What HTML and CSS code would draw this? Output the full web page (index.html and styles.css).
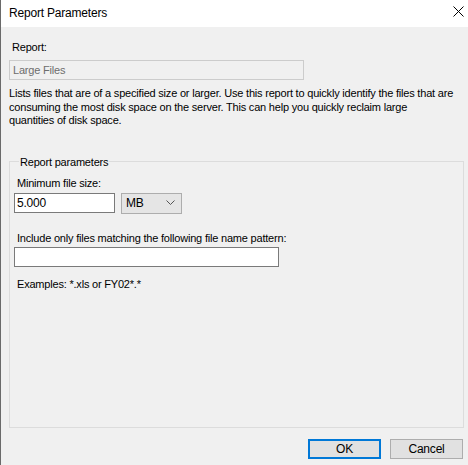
FILE: index.html
```html
<!DOCTYPE html>
<html>
<head>
<meta charset="utf-8">
<link rel="stylesheet" href="styles.css">
</head>
<body>
<div class="window">
  <div class="titlebar">
    <span class="title">Report Parameters</span>
    <svg class="close" width="11" height="11" viewBox="0 0 11 11"><path d="M0.5 0.5 L10.5 10.5 M10.5 0.5 L0.5 10.5" stroke="#000" stroke-width="1" fill="none"/></svg>
  </div>
  <div class="content">
    <div class="label report-label">Report:</div>
    <div class="readonly">Large Files</div>
    <p class="desc">Lists files that are of a specified size or larger. Use this report to quickly identify the files that are consuming the most disk space on the server. This can help you quickly reclaim large<br>quantities of disk space.</p>
    <fieldset class="group">
      <legend>Report parameters</legend>
      <div class="label min-label">Minimum file size:</div>
      <div class="row">
        <div class="textbox size">5.000</div>
        <div class="combo"><span>MB</span>
          <svg width="9" height="6" viewBox="0 0 9 6"><path d="M0.5 0.5 L4.5 4.5 L8.5 0.5" stroke="#555" stroke-width="1" fill="none"/></svg>
        </div>
      </div>
      <div class="label pat-label">Include only files matching the following file name pattern:</div>
      <div class="textbox pattern"></div>
      <div class="label ex-label">Examples: *.xls or FY02*.*</div>
    </fieldset>
    <div class="buttons">
      <div class="btn ok">OK</div>
      <div class="btn cancel">Cancel</div>
    </div>
  </div>
</div>
</body>
</html>
```
FILE: styles.css
```css
html, body {
  margin: 0;
  padding: 0;
}
body {
  width: 468px;
  height: 465px;
  overflow: hidden;
  font-family: "Liberation Sans", Arial, sans-serif;
  font-size: 11px;
  letter-spacing: -0.2px;
  color: #000;
}
.window {
  box-sizing: border-box;
  width: 468px;
  height: 465px;
  background: #f0f0f0;
  border-left: 1px solid #6a6a6a;
  display: flex;
  flex-direction: column;
}
.titlebar {
  height: 27px;
  background: #fff;
  display: flex;
  align-items: center;
  justify-content: space-between;
  padding: 0 4px 0 8px;
  flex-shrink: 0;
}
.title {
  font-size: 12px;
  letter-spacing: -0.2px;
  margin-top: -2px;
}
.close {
  display: block;
  margin-top: -4px;
}
.content {
  padding: 0 4px 0 8px;
  display: flex;
  flex-direction: column;
}
.label {
  line-height: 14px;
  height: 14px;
}
.report-label {
  margin-top: 13px;
  padding-left: 3px;
}
.readonly {
  box-sizing: border-box;
  margin-top: 6px;
  width: 295px;
  height: 20px;
  border: 1px solid #cccccc;
  background: #f0f0f0;
  color: #6d6d6d;
  padding-left: 3px;
  line-height: 18px;
}
.desc {
  margin: 7px 0 0 0;
  line-height: 13.5px;
  width: 452px;
}
.group {
  margin: 27px 0 0 0;
  width: 455px;
  box-sizing: border-box;
  height: 273px;
  border: 1px solid #dcdcdc;
  padding: 0 0 0 4px;
  display: flex;
  flex-direction: column;
}
.group legend {
  padding: 0 1px;
  margin-left: 5px;
  line-height: 14px;
}
.min-label {
  margin-top: 7px;
  padding-left: 3px;
}
.row {
  display: flex;
  gap: 6px;
  margin-top: 3px;
}
.textbox {
  box-sizing: border-box;
  height: 20px;
  border: 1px solid #7a7a7a;
  background: #fff;
  padding-left: 2px;
  line-height: 18px;
}
.size {
  width: 101px;
  font-size: 12px;
}
.combo {
  box-sizing: border-box;
  width: 61px;
  height: 21px;
  border: 1px solid #adadad;
  background: #e5e5e5;
  display: flex;
  align-items: center;
  justify-content: space-between;
  padding: 0 6px 0 4px;
  font-size: 12px;
}
.pat-label {
  margin-top: 17px;
  padding-left: 3px;
}
.pattern {
  margin-top: 2px;
  width: 265px;
}
.ex-label {
  margin-top: 10px;
  padding-left: 3px;
}
.buttons {
  display: flex;
  justify-content: flex-end;
  gap: 9px;
  margin-top: 11px;
  padding-right: 1px;
}
.btn {
  box-sizing: border-box;
  width: 73px;
  height: 20px;
  background: #e1e1e1;
  border: 1px solid #adadad;
  text-align: center;
  line-height: 18px;
  font-size: 12px;
}
.ok {
  border: 2px solid #0078d7;
  line-height: 16px;
}
```
